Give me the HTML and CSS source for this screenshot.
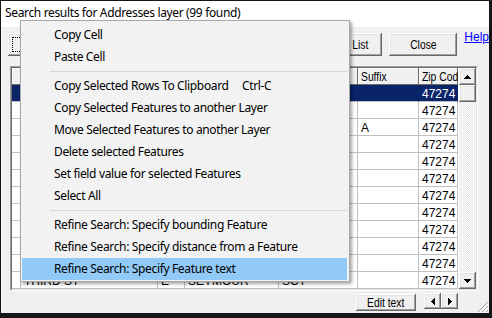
FILE: index.html
```html
<!DOCTYPE html>
<html>
<head>
<meta charset="utf-8">
<title>Search results</title>
<link rel="stylesheet" href="styles.css">
</head>
<body>
<div class="dlg">
  <div class="title">Search results for Addresses layer (99 found)</div>
  <div class="toolbar">
    <button class="btn btn-first"><span class="focus"></span></button>
    <button class="btn btn-list"><span class="lbl">Show List</span></button>
    <button class="btn btn-close"><span class="lbl">Close</span></button>
    <a class="help" href="#">Help</a>
  </div>
  <div class="gridframe">
    <div class="gridinner">
      <div class="cells">
        <div class="hrow">
          <div class="hcell c-ind"></div>
          <div class="hcell c-st"><span class="lbl">Street</span></div>
          <div class="hcell c-dir"><span class="lbl">Dir</span></div>
          <div class="hcell c-name"><span class="lbl">Name</span></div>
          <div class="hcell c-type"><span class="lbl">Type</span></div>
          <div class="hcell c-suf"><span class="lbl">Suffix</span></div>
          <div class="hcell c-zip"><span class="lbl">Zip Code</span></div>
        </div>
        <div class="row sel"><div class="cell c-ind"></div><div class="cell c-st">101 MAIN ST</div><div class="cell c-dir">N</div><div class="cell c-name">NORTH VERNON</div><div class="cell c-type">JEN</div><div class="cell c-suf"></div><div class="cell c-zip">47274</div></div>
        <div class="row"><div class="cell c-ind"></div><div class="cell c-st">103 MAIN ST</div><div class="cell c-dir">N</div><div class="cell c-name">SEYMOUR</div><div class="cell c-type">SCT</div><div class="cell c-suf"></div><div class="cell c-zip">47274</div></div>
        <div class="row"><div class="cell c-ind"></div><div class="cell c-st">105 MAIN ST</div><div class="cell c-dir">N</div><div class="cell c-name">SEYMOUR</div><div class="cell c-type">SCT</div><div class="cell c-suf">A</div><div class="cell c-zip">47274</div></div>
        <div class="row"><div class="cell c-ind"></div><div class="cell c-st">210 WALNUT ST</div><div class="cell c-dir">W</div><div class="cell c-name">SEYMOUR</div><div class="cell c-type">SCT</div><div class="cell c-suf"></div><div class="cell c-zip">47274</div></div>
        <div class="row"><div class="cell c-ind"></div><div class="cell c-st">212 WALNUT ST</div><div class="cell c-dir">W</div><div class="cell c-name">SEYMOUR</div><div class="cell c-type">SCT</div><div class="cell c-suf"></div><div class="cell c-zip">47274</div></div>
        <div class="row"><div class="cell c-ind"></div><div class="cell c-st">300 CHESTNUT ST</div><div class="cell c-dir">S</div><div class="cell c-name">SEYMOUR</div><div class="cell c-type">SCT</div><div class="cell c-suf"></div><div class="cell c-zip">47274</div></div>
        <div class="row"><div class="cell c-ind"></div><div class="cell c-st">415 POPLAR ST</div><div class="cell c-dir">S</div><div class="cell c-name">SEYMOUR</div><div class="cell c-type">SCT</div><div class="cell c-suf"></div><div class="cell c-zip">47274</div></div>
        <div class="row"><div class="cell c-ind"></div><div class="cell c-st">120 SECOND ST</div><div class="cell c-dir">E</div><div class="cell c-name">SEYMOUR</div><div class="cell c-type">SCT</div><div class="cell c-suf"></div><div class="cell c-zip">47274</div></div>
        <div class="row"><div class="cell c-ind"></div><div class="cell c-st">122 SECOND ST</div><div class="cell c-dir">E</div><div class="cell c-name">SEYMOUR</div><div class="cell c-type">SCT</div><div class="cell c-suf"></div><div class="cell c-zip">47274</div></div>
        <div class="row"><div class="cell c-ind"></div><div class="cell c-st">204 SECOND ST</div><div class="cell c-dir">E</div><div class="cell c-name">SEYMOUR</div><div class="cell c-type">SCT</div><div class="cell c-suf"></div><div class="cell c-zip">47274</div></div>
        <div class="row"><div class="cell c-ind"></div><div class="cell c-st">118 THIRD ST</div><div class="cell c-dir">E</div><div class="cell c-name">SEYMOUR</div><div class="cell c-type">SCT</div><div class="cell c-suf"></div><div class="cell c-zip">47274</div></div>
        <div class="row"><div class="cell c-ind"></div><div class="cell c-st">THIRD ST</div><div class="cell c-dir">E</div><div class="cell c-name">SEYMOUR</div><div class="cell c-type">SCT</div><div class="cell c-suf"></div><div class="cell c-zip">47274</div></div>
      </div>
      <div class="vscroll">
        <div class="sbtn"><svg width="7" height="4" viewBox="0 0 7 4"><path d="M3 0H4V1H5V2H6V3H7V4H0V3H1V2H2V1H3Z"/></svg></div>
        <div class="sbtn thumb"></div>
        <div class="track"></div>
        <div class="sbtn"><svg width="7" height="4" viewBox="0 0 7 4"><path d="M0 0H7V1H6V2H5V3H4V4H3V3H2V2H1V1H0Z"/></svg></div>
      </div>
    </div>
  </div>
  <div class="bottombar">
    <button class="btn btn-edit"><span class="lbl">Edit text</span></button>
    <div class="hscroll">
      <div class="sbtn hbtn"><svg width="4" height="7" viewBox="0 0 4 7"><path d="M3 0H4V7H3V6H2V5H1V4H0V3H1V2H2V1H3Z"/></svg></div>
      <div class="sbtn hbtn"><svg width="4" height="7" viewBox="0 0 4 7"><path d="M0 0H1V1H2V2H3V3H4V4H3V5H2V6H1V7H0Z"/></svg></div>
    </div>
    <svg class="grip" width="12" height="12" viewBox="0 0 12 12">
      <path d="M11 1L1 11M11 5L5 11M11 9L9 11" stroke="#a0a0a0" stroke-width="1"/>
      <path d="M12 2L2 12M12 6L6 12M12 10L10 12" stroke="#ffffff" stroke-width="1"/>
    </svg>
  </div>
</div>

<div class="menu">
  <div class="item">Copy Cell</div>
  <div class="item">Paste Cell</div>
  <div class="sep"></div>
  <div class="item"><span class="klabel">Copy Selected Rows To Clipboard</span><span>Ctrl-C</span></div>
  <div class="item">Copy Selected Features to another Layer</div>
  <div class="item">Move Selected Features to another Layer</div>
  <div class="item">Delete selected Features</div>
  <div class="item">Set field value for selected Features</div>
  <div class="item">Select All</div>
  <div class="sep"></div>
  <div class="item">Refine Search: Specify bounding Feature</div>
  <div class="item">Refine Search: Specify distance from a Feature</div>
  <div class="item hot">Refine Search: Specify Feature text</div>
</div>
</body>
</html>
```

FILE: styles.css
```css
* { box-sizing: border-box; }
html, body { margin: 0; padding: 0; }
body {
  width: 492px;
  height: 318px;
  overflow: hidden;
  background: #161616;
  position: relative;
}

.dlg {
  margin: 1px 3px 0 1px;
  width: 488px;
  height: 312px;
  background: #f0f0f0;
  display: flex;
  flex-direction: column;
  font-family: "Liberation Sans", Arial, sans-serif;
  font-size: 12px;
  color: #000;
  overflow: hidden;
}

.title {
  flex: none;
  height: 26px;
  background: #fff;
  font-family: "Noto Sans", sans-serif;
  font-size: 12px;
  letter-spacing: -0.35px;
  line-height: 24px;
  padding-left: 4px;
  white-space: nowrap;
}

.toolbar {
  flex: none;
  display: flex;
  height: 23px;
  margin-top: 6px;
  padding-left: 7px;
}

.btn {
  font: 12px "Liberation Sans", Arial, sans-serif;
  color: #000;
  background: #f0f0f0;
  border: 0;
  padding: 0;
  margin: 0;
  box-shadow: inset -1px -1px #696969, inset 1px 1px #fff, inset -2px -2px #a0a0a0, inset 2px 2px #e3e3e3;
  display: flex;
  align-items: center;
  justify-content: center;
  white-space: nowrap;
}
.lbl { display: inline-block; transform: scaleX(0.86); }

.btn-first { width: 60px; position: relative; }
.focus {
  position: absolute;
  inset: 4px;
  border: 1px dotted #000;
}
.btn-list { width: 78px; margin-left: 237px; padding-left: 6px; }
.btn-close { width: 69px; margin-left: 7px; }

.help {
  margin-left: 7px;
  margin-top: -3px;
  align-self: flex-start;
  color: #0000ff;
  text-decoration: underline;
  line-height: 14px;
  white-space: nowrap;
}

.gridframe {
  flex: none;
  margin: 10px 0 0 9px;
  width: 468px;
  height: 225px;
  border: 1px solid;
  border-color: #a0a0a0 #fff #fff #a0a0a0;
}
.gridinner {
  height: 100%;
  border: 1px solid;
  border-color: #696969 #e3e3e3 #e3e3e3 #696969;
  display: flex;
  background: #fff;
}
.cells { width: 447px; overflow: hidden; flex: none; }

.hrow, .row { display: flex; height: 17px; }
.hcell, .cell {
  flex: none;
  padding: 2px 3px 0;
  line-height: 14px;
  white-space: nowrap;
  overflow: hidden;
}
.hcell {
  background: #f0f0f0;
  box-shadow: inset -1px -1px #696969, inset 1px 1px #fff;
}
.hcell .lbl { transform-origin: left center; }
.cell {
  border-right: 1px solid #c0c0c0;
  border-bottom: 1px solid #c0c0c0;
}
.row.sel .cell {
  background: #0a246a;
  color: #fff;
  border-right-color: #0a246a;
}
.c-ind { width: 9px; }
.c-st { width: 137px; }
.c-dir { width: 27px; }
.c-name { width: 94px; }
.c-type { width: 79px; }
.c-suf { width: 61px; }
.c-zip { width: 39px; }

.vscroll {
  width: 17px;
  flex: none;
  display: flex;
  flex-direction: column;
}
.sbtn {
  flex: none;
  width: 17px;
  height: 17px;
  background: #f0f0f0;
  box-shadow: inset -1px -1px #696969, inset 1px 1px #fff, inset -2px -2px #a0a0a0, inset 2px 2px #e3e3e3;
  display: flex;
  align-items: center;
  justify-content: center;
}
.sbtn svg { display: block; fill: #000; }
.track {
  flex: 1;
  background: repeating-conic-gradient(#ffffff 0 25%, #e6e6e6 0 50%) 0 0 / 2px 2px;
}

.bottombar {
  flex: none;
  height: 22px;
  display: flex;
  align-items: flex-start;
}
.btn-edit {
  width: 60px;
  height: 17px;
  margin: 3px 0 0 355px;
}
.hscroll {
  display: flex;
  margin: 2px 0 0 8px;
}
.hbtn { height: 16px; }
.grip {
  margin-left: auto;
  align-self: flex-end;
  display: block;
}

.menu {
  position: absolute;
  left: 20px;
  top: 20px;
  width: 330px;
  height: 262px;
  background: #f2f2f2;
  border: 1px solid #a8a8a8;
  box-shadow: 2px 2px 3px rgba(0, 0, 0, 0.35);
  padding: 3px 0 1px;
  font-family: "Noto Sans", sans-serif;
  font-size: 12px;
  letter-spacing: -0.35px;
  color: #000;
}
.item {
  height: 22px;
  line-height: 22px;
  margin: 0 2px 0 1px;
  padding-left: 32px;
  white-space: nowrap;
  display: flex;
}
.klabel { width: 188px; flex: none; }
.item.hot { background: #91c9f7; }
.sep {
  height: 1px;
  background: #d7d7d7;
  margin: 3px 2px 3px 29px;
}
```
